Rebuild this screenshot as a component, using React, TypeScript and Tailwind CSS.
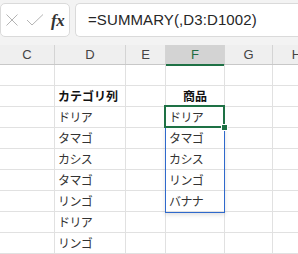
import React from 'react';

const cols = [
  { key: 'C', w: 'w-[55px]' },
  { key: 'D', w: 'w-[71px]' },
  { key: 'E', w: 'w-[40px]' },
  { key: 'F', w: 'w-[59px]' },
  { key: 'G', w: 'w-[48px]' },
  { key: 'H', w: 'w-[48px]' },
];

// row contents: [D, F]
const rows: [string, string, boolean?][] = [
  ['', ''],
  ['カテゴリ列', '商品', true],
  ['ドリア', 'ドリア'],
  ['タマゴ', 'タマゴ'],
  ['カシス', 'カシス'],
  ['タマゴ', 'リンゴ'],
  ['リンゴ', 'バナナ'],
  ['ドリア', ''],
  ['リンゴ', ''],
];

const jp = "font-['Noto_Sans_CJK_JP',sans-serif]";

const App: React.FC = () => {
  return (
    <div className="w-[298px] h-[254px] overflow-hidden bg-[#f3f3f3] font-['Liberation_Sans',Arial,sans-serif]">
      {/* formula bar */}
      <div className="flex h-[45px] pt-[3px] gap-[5px]">
        <div className="flex items-center w-[70px] h-[34px] shrink-0 bg-white border border-[#dadada] rounded-[5px] pl-[3px]">
          <svg width="14" height="14" viewBox="0 0 14 14" className="ml-[1px]">
            <path d="M1.5 1.5 L12.5 12.5 M12.5 1.5 L1.5 12.5" stroke="#b4b4b4" strokeWidth="1" fill="none" />
          </svg>
          <svg width="18" height="14" viewBox="0 0 18 14" className="ml-[7px]">
            <path d="M1 7 L6 12 L17 1.5" stroke="#b4b4b4" strokeWidth="1" fill="none" />
          </svg>
          <span className="ml-[7px] text-[17px] leading-none italic font-bold text-[#333] font-['Liberation_Serif',serif] tracking-[-0.5px]">
            fx
          </span>
        </div>
        <div className="flex items-center flex-1 h-[34px] bg-white border border-[#dadada] rounded-l-[5px] border-r-0 pl-[12px]">
          <span className="text-[15px] text-[#262626] tracking-[0.1px]">=SUMMARY(,D3:D1002)</span>
        </div>
      </div>

      {/* grid */}
      <div className="relative bg-white">
        <div className="flex h-[20px] bg-[#efefef] border-b border-[#c8c8c8]">
          {cols.map((c) => (
            <div
              key={c.key}
              className={`${c.w} shrink-0 flex items-center justify-center text-[13px] border-r border-[#d4d4d4] ${
                c.key === 'F'
                  ? 'bg-[#d3d3d3] text-[#1e6b41] border-b-2 border-b-[#1e7145] h-[21px]'
                  : 'text-[#444]'
              }`}
            >
              {c.key}
            </div>
          ))}
        </div>
        {rows.map((r, i) => (
          <div key={i} className="flex h-[21px]">
            {cols.map((c) => {
              let text = '';
              if (c.key === 'D') text = r[0];
              if (c.key === 'F') text = r[1];
              return (
                <div
                  key={c.key}
                  className={`${c.w} shrink-0 flex items-center border-r border-b border-[#e1e1e1] ${jp} text-[12px] ${
                    r[2] ? 'font-bold text-[#111]' : 'text-[#333] tracking-[-0.6px]'
                  } ${r[2] && c.key === 'F' ? 'justify-center' : 'pl-[3px]'}`}
                >
                  {text}
                </div>
              );
            })}
          </div>
        ))}

        {/* spill range */}
        <div className="absolute left-[165px] top-[82px] w-[60px] h-[86px] border border-[#2f69cc] shadow-[0_2px_4px_rgba(0,0,0,0.12)]" />
        {/* active cell */}
        <div className="absolute left-[164px] top-[60px] w-[61px] h-[23px] border-2 border-[#1e7145]" />
        <div className="absolute left-[222px] top-[80px] w-[5px] h-[5px] bg-[#1e7145] outline outline-1 outline-white" />
      </div>
    </div>
  );
};

export default App;
